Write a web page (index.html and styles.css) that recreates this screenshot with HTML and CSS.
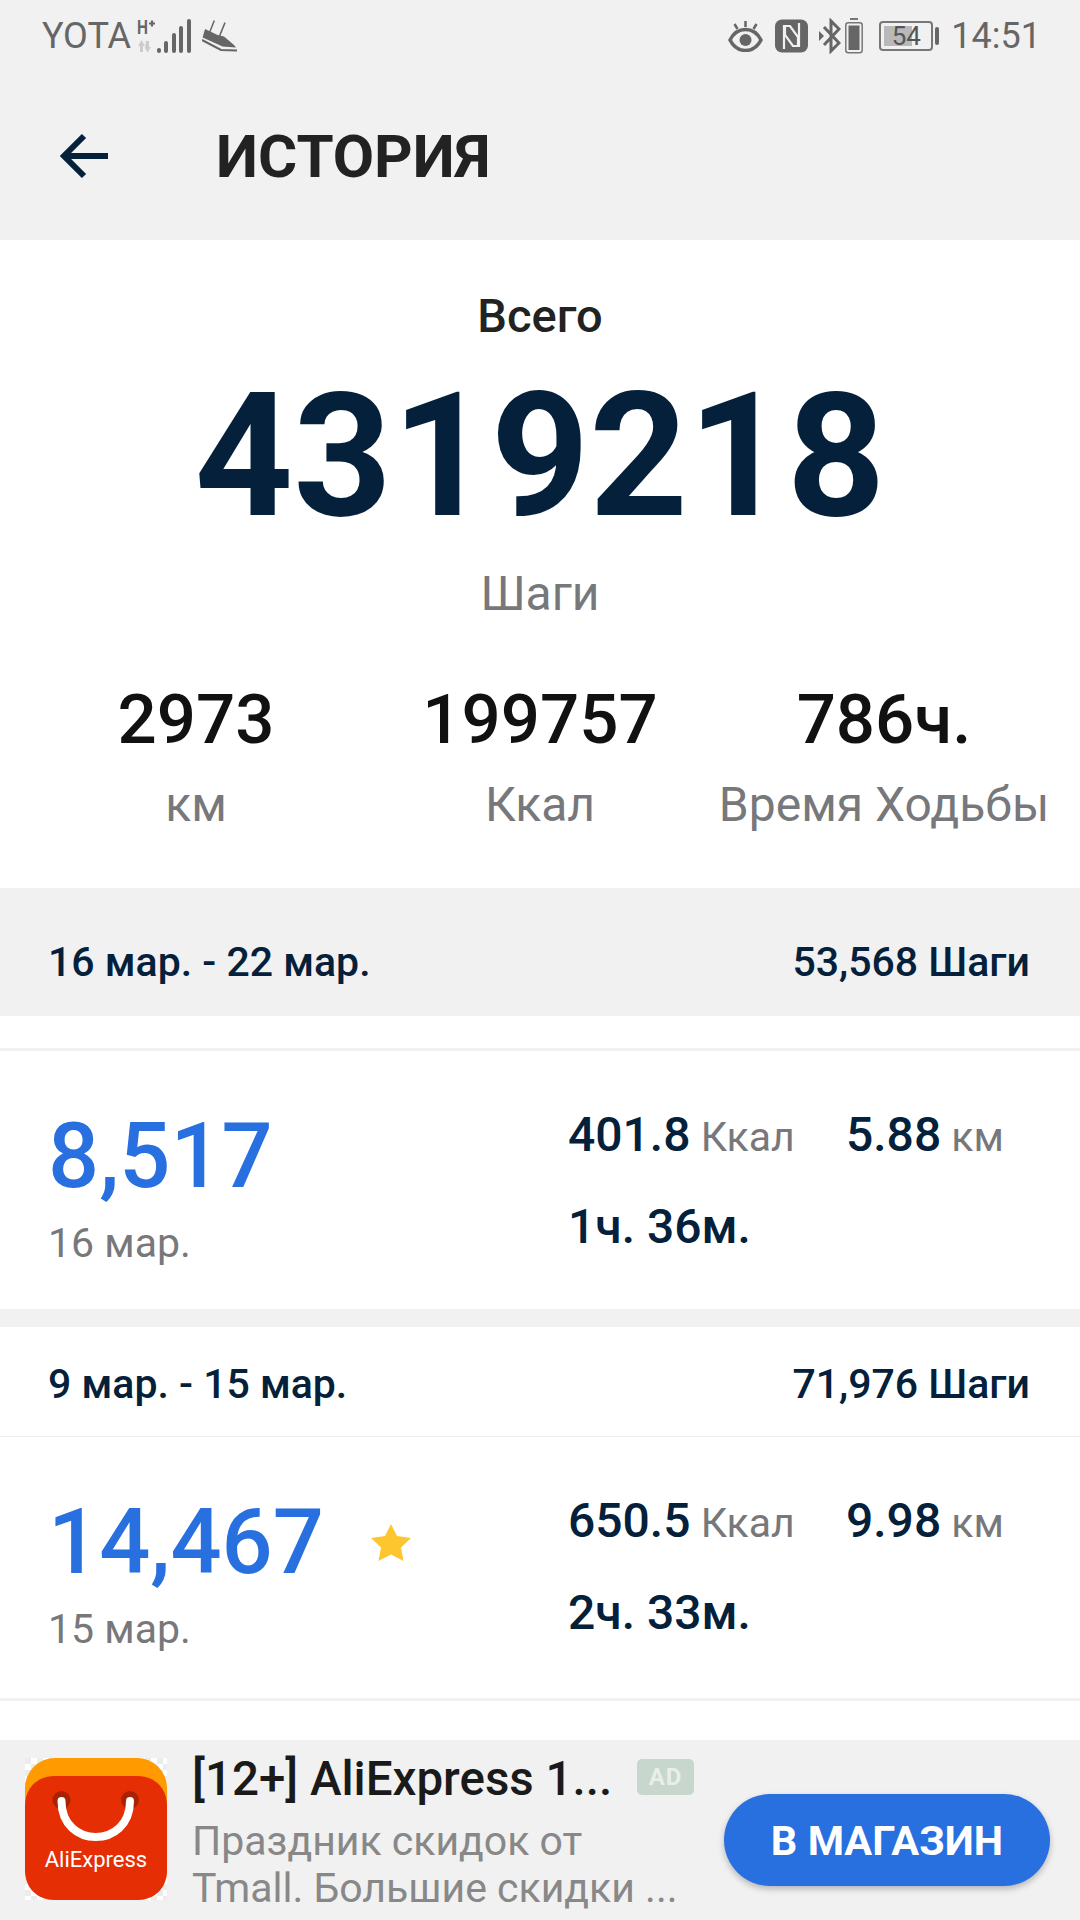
FILE: index.html
```html
<!DOCTYPE html>
<html lang="ru">
<head>
<meta charset="utf-8">
<title>История</title>
<link rel="stylesheet" href="styles.css">
</head>
<body>
<div class="app">
  <header class="top">
    <div class="status">
      <div class="status-group">
        <span class="status-text">YOTA</span>
        <svg class="i-signal" width="54" height="34" viewBox="0 0 54 34">
          <text x="0" y="15" class="net-label" textLength="11" lengthAdjust="spacingAndGlyphs">H</text>
          <path d="M12 4.500h6M15 1.500v6" stroke="#666" stroke-width="2.200" fill="none"/>
          <path d="M1 27l3.500-6 3.500 6H6v6H3v-6zM9 22h3v6h2l-3.500 5.500L8 29z" fill="#ccc"/>
          <g stroke="#666" stroke-width="4" stroke-linecap="round">
            <path d="M22 31v1M29 24v8M37 16v16M44 9v23M52 2v30"/>
          </g>
        </svg>
        <svg class="i-shoe" width="36" height="34" viewBox="0 0 36 34">
          <path d="M12.300 1.600L7.300 14.300M23 3.600L17.300 17.600" stroke="#666" stroke-width="1.500" fill="none"/>
          <path d="M3 10l12.600 6 6.400 1.600 10 8.400 2 2.600-13.400-1L.6 18.600z" fill="#666"/>
          <path d="M0 21l19 10 16 .6" stroke="#666" stroke-width="2" fill="none"/>
        </svg>
      </div>
      <div class="status-group">
        <svg class="i-eye" width="35" height="32" viewBox="0 0 35 32">
          <path d="M2 20c7-14 24-14 31 0-7 14-24 14-31 0z" fill="none" stroke="#666" stroke-width="3.500"/>
          <circle cx="17.500" cy="20" r="6" fill="#666"/>
          <path d="M17.500 1v6M6.500 4l3 5M28.500 4l-3 5" stroke="#666" stroke-width="2.500"/>
        </svg>
        <svg class="i-nfc" width="33" height="34" viewBox="0 0 33 34">
          <rect width="33" height="33" y=".5" rx="7" fill="#666"/>
          <path d="M9 30V7h6l8 11v9M24 4v23h-6L10 16V7" fill="none" stroke="#f1f1f1" stroke-width="2.200"/>
        </svg>
        <svg class="i-bt" width="22" height="36" viewBox="0 0 22 36">
          <path d="M5 9l15 16-8 8V3l8 8L5 27" fill="none" stroke="#666" stroke-width="3"/>
          <path d="M0 13l5 5-5 5z" fill="#666"/>
        </svg>
        <svg class="i-cell" width="18" height="36" viewBox="0 0 18 36">
          <path d="M5 1h8" stroke="#777" stroke-width="2"/>
          <rect x=".8" y="4.800" width="16.400" height="30" rx="2.500" fill="none" stroke="#777" stroke-width="1.500"/>
          <rect x="3.500" y="7.500" width="11" height="24.500" fill="#666"/>
        </svg>
        <div class="battery">
          <div class="battery-body"><div class="battery-fill"></div><span class="battery-num">54</span></div>
          <div class="battery-cap"></div>
        </div>
        <span class="status-text status-time">14:51</span>
      </div>
    </div>
    <div class="appbar">
      <svg class="back" width="50" height="46" viewBox="0 0 50 46">
        <path d="M48 23H4M24 3L4 23l20 20" fill="none" stroke="#04203a" stroke-width="6"/>
      </svg>
      <h1 class="title">ИСТОРИЯ</h1>
    </div>
  </header>

  <section class="summary">
    <div class="sum-label">Всего</div>
    <div class="sum-value">4319218</div>
    <div class="sum-unit">Шаги</div>
    <div class="sum-cols">
      <div class="sum-col"><div class="col-value">2973</div><div class="col-unit">км</div></div>
      <div class="sum-col"><div class="col-value">199757</div><div class="col-unit">Ккал</div></div>
      <div class="sum-col"><div class="col-value">786ч.</div><div class="col-unit">Время Ходьбы</div></div>
    </div>
  </section>

  <div class="week week-gray">
    <span>16 мар. - 22 мар.</span><span>53,568 Шаги</span>
  </div>
  <div class="spacer"></div>

  <div class="day">
    <div class="day-left">
      <div class="steps-row"><span class="steps">8,517</span></div>
      <div class="day-date">16 мар.</div>
    </div>
    <div class="day-right">
      <div class="metric-row">
        <span class="metric m-kcal"><b>401.8</b> <i>Ккал</i></span>
        <span class="metric"><b>5.88</b> <i>км</i></span>
      </div>
      <div class="metric-row"><span class="metric"><b>1ч. 36м.</b></span></div>
    </div>
  </div>

  <div class="gap"></div>

  <div class="week week-white">
    <span>9 мар. - 15 мар.</span><span>71,976 Шаги</span>
  </div>

  <div class="day day-second">
    <div class="day-left">
      <div class="steps-row">
        <span class="steps">14,467</span>
        <svg class="star" width="42" height="38" viewBox="0 0 42 38">
          <path d="M21 1l6 12 14 2-10 9.500 2.500 13.500L21 31.500 8.500 38 11 24.500 1 15l14-2z" fill="#fdc62e"/>
        </svg>
      </div>
      <div class="day-date">15 мар.</div>
    </div>
    <div class="day-right">
      <div class="metric-row">
        <span class="metric m-kcal"><b>650.5</b> <i>Ккал</i></span>
        <span class="metric"><b>9.98</b> <i>км</i></span>
      </div>
      <div class="metric-row"><span class="metric"><b>2ч. 33м.</b></span></div>
    </div>
  </div>
  <div class="tail"></div>

  <aside class="ad">
    <svg class="ad-logo" width="142" height="142" viewBox="0 0 142 142">
      <defs>
        <pattern id="check" width="12" height="12" patternUnits="userSpaceOnUse">
          <rect width="12" height="12" fill="#fff"/>
          <rect width="6" height="6" fill="#ececec"/>
          <rect x="6" y="6" width="6" height="6" fill="#ececec"/>
        </pattern>
      </defs>
      <rect width="142" height="142" fill="url(#check)"/>
      <rect width="142" height="142" rx="30" fill="#ff9a00"/>
      <path d="M0 48c0-18 12-30 30-30h82c18 0 30 12 30 30v64c0 18-12 30-30 30H30c-18 0-30-12-30-30z" fill="#e62e04"/>
      <circle cx="36.500" cy="42" r="9" fill="#a82204"/>
      <circle cx="105" cy="42" r="9" fill="#a82204"/>
      <path d="M36.500 43c0 48 68.500 48 68.500 0" fill="none" stroke="#fff" stroke-width="8" stroke-linecap="round"/>
      <text x="71" y="109" class="logo-text" text-anchor="middle">AliExpress</text>
    </svg>
    <div class="ad-text">
      <div class="ad-head">
        <span class="ad-title">[12+] AliExpress 1...</span>
        <span class="ad-badge">AD</span>
      </div>
      <div class="ad-desc">Праздник скидок от<br>Tmall. Большие скидки ...</div>
    </div>
    <button class="ad-btn">В МАГАЗИН</button>
  </aside>
</div>
</body>
</html>
```

FILE: styles.css
```css
* { box-sizing: border-box; }
html, body { margin: 0; padding: 0; }
body { background: #fff; font-family: Roboto, "Noto Sans", sans-serif; }
.app { width: 1080px; height: 1920px; overflow: hidden; display: flex; flex-direction: column; background: #fff; }

.top { height: 240px; background: #f1f1f1; flex: none; }
.status { height: 72px; padding: 0 39px 0 42px; display: flex; justify-content: space-between; align-items: center; }
.status-group { display: flex; align-items: center; }
.status-text { font-size: 36px; color: #666; }
.status-time { margin-left: 12px; }
.net-label { font: 700 20px "Liberation Sans", sans-serif; fill: #666; }
.i-signal { margin-left: 6px; }
.i-shoe { margin-left: 11px; }
.i-nfc { margin-left: 12px; }
.i-bt { margin-left: 11px; }
.i-cell { margin-left: 4px; }
.battery { display: flex; align-items: center; gap: 2px; margin-left: 16px; }
.battery-body { position: relative; width: 54px; height: 30px; border: 2px solid #777; border-radius: 4px; padding: 3px; }
.battery-fill { width: 28px; height: 100%; background: #b9b9b9; }
.battery-num { position: absolute; inset: 0; text-align: center; font-size: 26px; line-height: 26px; color: #555; }
.battery-cap { width: 4px; height: 18px; background: #666; border-radius: 2px; }

.appbar { height: 168px; display: flex; align-items: center; padding: 0 0 0 60px; }
.back { flex: none; }
.title { margin: 0 0 0 106px; font-size: 60px; font-weight: 700; color: #222; }

.summary { height: 648px; flex: none; padding-top: 50px; display: flex; flex-direction: column; align-items: center; }
.sum-label { font-size: 47px; line-height: 52px; font-weight: 500; color: #222; }
.sum-value { font-size: 172px; line-height: 200px; margin-top: 14px; font-weight: 700; color: #04203a; }
.sum-unit { font-size: 48px; line-height: 52px; margin-top: 12px; color: #77787b; }
.sum-cols { width: 100%; margin-top: 60px; padding-left: 24px; display: grid; grid-template-columns: 344px 344px 344px; }
.sum-col { display: flex; flex-direction: column; align-items: center; }
.col-value { font-size: 69px; line-height: 80px; font-weight: 500; color: #111; }
.col-unit { font-size: 48px; line-height: 54px; margin-top: 18px; color: #77787b; white-space: nowrap; }

.week { display: flex; justify-content: space-between; align-items: center; padding: 0 50px 0 48px; font-size: 41px; font-weight: 500; color: #04203a; flex: none; }
.week-gray { height: 128px; padding-top: 20px; background: #f1f1f1; }
.week-white { height: 110px; padding-top: 4px; border-bottom: 1px solid #eee; }
.spacer { height: 35px; border-bottom: 3px solid #f1f1f1; flex: none; }

.day { height: 258px; padding: 0 0 0 48px; display: flex; flex: none; }
.day-second { height: 261px; }
.day-left { width: 520px; padding-top: 63px; flex: none; }
.steps-row { display: flex; align-items: center; height: 86px; }
.steps { font-size: 90px; line-height: 86px; font-weight: 500; color: #286fdf; }
.star { margin-left: 46px; margin-top: -2px; }
.day-date { font-size: 41px; line-height: 46px; margin-top: 20px; color: #77787b; }
.day-right { padding-top: 59px; }
.metric-row { display: flex; height: 92px; align-items: flex-start; }
.metric { font-size: 41px; line-height: 50px; }
.m-kcal { width: 278px; }
.metric b { font-size: 48px; font-weight: 500; color: #04203a; }
.metric i { font-style: normal; font-size: 41px; color: #77787b; }

.gap { height: 18px; background: #f1f1f1; flex: none; }
.tail { flex: 1; border-top: 3px solid #f1f1f1; }

.ad { height: 180px; background: #f1f1f1; display: flex; align-items: flex-start; padding: 18px 0 0 25px; flex: none; }
.ad-logo { flex: none; }
.ad-text { margin-left: 25px; width: 530px; flex: none; }
.ad-head { display: flex; align-items: flex-start; height: 60px; margin-top: -4px; }
.ad-title { font-size: 47.5px; font-weight: 500; line-height: 50px; color: #1a1a1a; width: 445px; white-space: nowrap; }
.ad-badge { width: 57px; height: 36px; margin-top: 5px; background: #c8d7cd; color: #e8eee9; border-radius: 5px; font-size: 24px; font-weight: 700; text-align: center; line-height: 36px; letter-spacing: 1px; }
.ad-desc { font-size: 41px; line-height: 47px; margin-top: 4px; color: #888; white-space: nowrap; }
.ad-btn { width: 326px; height: 92px; border: 0; margin: 36px 0 0 2px; background: #286fdf; color: #fff; border-radius: 46px; font: 700 41.5px Roboto, sans-serif; box-shadow: 0 3px 6px rgba(0,0,0,.25); flex: none; padding: 0; }
.logo-text { font: 400 22px Roboto, sans-serif; fill: #fff; }
```
